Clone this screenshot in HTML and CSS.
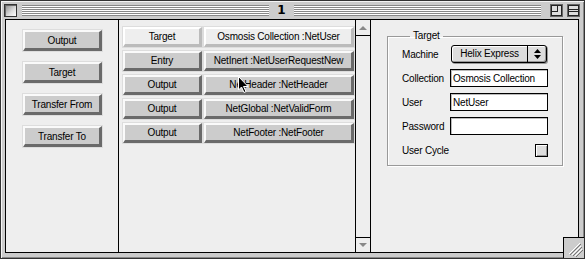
FILE: index.html
```html
<!DOCTYPE html>
<html lang="en">
<head>
    <meta charset="UTF-8">
    <title>1</title>
    <link rel="stylesheet" href="styles.css">
</head>
<body>
    <div class="window">
        <div class="titlebar">
            <span class="closebox"></span>
            <span class="stripes"></span>
            <span class="title">1</span>
            <span class="stripes"></span>
            <span class="winbox">
                <svg width="11" height="11" viewBox="0 0 11 11"><rect x="0.5" y="0.5" width="10" height="10" fill="none" stroke="#222"/><rect x="0.5" y="0.5" width="6" height="6" fill="none" stroke="#222"/></svg>
            </span>
            <span class="winbox">
                <svg width="11" height="11" viewBox="0 0 11 11"><rect x="0.5" y="0.5" width="10" height="10" fill="none" stroke="#222"/><line x1="0" y1="4.5" x2="11" y2="4.5" stroke="#222"/><line x1="0" y1="6.5" x2="11" y2="6.5" stroke="#222"/></svg>
            </span>
        </div>

        <div class="content">
            <div class="tools">
                <button class="btn">Output</button>
                <button class="btn">Target</button>
                <button class="btn">Transfer From</button>
                <button class="btn">Transfer To</button>
            </div>

            <div class="list">
                <div class="row selected">
                    <button class="btn kind">Target</button>
                    <button class="btn name">Osmosis Collection :NetUser</button>
                </div>
                <div class="row">
                    <button class="btn kind">Entry</button>
                    <button class="btn name">NetInert :NetUserRequestNew</button>
                </div>
                <div class="row">
                    <button class="btn kind">Output</button>
                    <button class="btn name">NetHeader :NetHeader</button>
                </div>
                <div class="row">
                    <button class="btn kind">Output</button>
                    <button class="btn name">NetGlobal :NetValidForm</button>
                </div>
                <div class="row">
                    <button class="btn kind">Output</button>
                    <button class="btn name">NetFooter :NetFooter</button>
                </div>
            </div>

            <div class="scrollbar">
                <div class="arrow up"></div>
                <div class="track"></div>
                <div class="arrow down"></div>
            </div>

            <div class="inspector">
                <fieldset class="group">
                    <legend>Target</legend>
                    <div class="fields">
                        <label>Machine</label>
                        <div class="popup">
                            <span class="popup-value">Helix Express</span>
                            <span class="popup-arrows">
                                <svg width="9" height="10" viewBox="0 0 9 10"><path d="M4.5 0 L8 4 L1 4 Z M1 6 L8 6 L4.5 10 Z" fill="#000"/></svg>
                            </span>
                        </div>

                        <label>Collection</label>
                        <div class="field">Osmosis Collection</div>

                        <label>User</label>
                        <div class="field">NetUser</div>

                        <label>Password</label>
                        <div class="field"></div>

                        <label class="wide">User Cycle</label>
                        <span class="checkbox"></span>
                    </div>
                </fieldset>
            </div>

            <div class="growbox">
                <svg width="20" height="20" viewBox="0 0 20 20">
                    <path d="M5 16 L16 5 M8 17 L17 8 M11 18 L18 11" stroke="#fff" stroke-width="1"/>
                    <path d="M6 17 L17 6 M9 18 L18 9 M12 19 L19 12" stroke="#777" stroke-width="1"/>
                </svg>
            </div>

            <svg class="cursor" width="12" height="18" viewBox="0 0 12 18">
                <path d="M0.5 0.5 L0.5 14 L3.5 11 L6 16.5 L8 15.5 L5.5 10.5 L10 10.5 Z" fill="#000" stroke="#fff" stroke-width="1"/>
            </svg>
        </div>
    </div>
</body>
</html>
```

FILE: styles.css
```css
* {
    margin: 0;
    padding: 0;
    box-sizing: border-box;
}

body {
    width: 585px;
    height: 259px;
    background: #eeeeee;
    font-family: 'Liberation Sans', Arial, sans-serif;
    font-size: 10px;
    letter-spacing: -0.2px;
    color: #000;
}

.window {
    width: 585px;
    height: 259px;
    border: 1px solid #333;
    background: #cccccc;
    box-shadow: inset 1px 1px 0 #f4f4f4, inset -1px -1px 0 #888;
    display: flex;
    flex-direction: column;
}

/* title bar */

.titlebar {
    height: 18px;
    display: flex;
    align-items: center;
    padding: 0 4px 0 3px;
}

.closebox {
    width: 13px;
    height: 13px;
    border: 1px solid #333;
    background: linear-gradient(135deg, #888, #ddd 60%, #fff);
    box-shadow: inset 1px 1px 0 #666;
}

.stripes {
    flex: 1;
    height: 11px;
    margin: 0 5px;
    background: repeating-linear-gradient(to bottom, #888 0, #888 1px, #fff 1px, #fff 2px);
}

.title {
    font-family: 'DejaVu Sans', sans-serif;
    font-weight: bold;
    font-size: 12px;
    letter-spacing: 0;
    padding: 0 3px;
}

.winbox {
    width: 13px;
    height: 13px;
    display: flex;
    align-items: center;
    justify-content: center;
    border: 1px solid #666;
    background: #ddd;
    margin-left: 4px;
}

.winbox:first-of-type {
    margin-left: 0;
}

/* content */

.content {
    position: relative;
    flex: 1;
    margin: 0 5px 5px 4px;
    border: 1px solid #000;
    background: #eeeeee;
    display: flex;
}

.btn {
    font-family: 'Liberation Sans', Arial, sans-serif;
    font-size: 10px;
    letter-spacing: -0.2px;
    color: #000;
    background: #cccccc;
    border-style: solid;
    border-width: 2px 3px 3px 2px;
    border-color: #fafafa #6a6a6a #6a6a6a #fafafa;
    box-shadow: 0 0 0 1px #dddddd;
    white-space: nowrap;
    cursor: pointer;
}

.tools {
    width: 113px;
    border-right: 1px solid #000;
    display: flex;
    flex-direction: column;
    gap: 11px;
    padding: 10px 0 0 17px;
}

.tools .btn {
    width: 79px;
    height: 21px;
}

.list {
    width: 237px;
    border-right: 1px solid #000;
    display: flex;
    flex-direction: column;
    gap: 4px;
    padding: 7px 0 0 4px;
}

.row {
    display: flex;
    gap: 2px;
}

.row .btn {
    height: 20px;
}

.kind {
    width: 79px;
}

.name {
    width: 150px;
}

.row.selected .btn {
    background: #eeeeee;
    border-color: #ffffff #bbbbbb #bbbbbb #ffffff;
}

/* scrollbar */

.scrollbar {
    width: 15px;
    border-right: 1px solid #000;
    display: flex;
    flex-direction: column;
}

.arrow {
    height: 16px;
    position: relative;
}

.arrow.up {
    border-bottom: 1px solid #000;
}

.arrow.down {
    border-top: 1px solid #000;
    height: 15px;
}

.arrow::after {
    content: "";
    position: absolute;
    left: 3px;
    width: 0;
    height: 0;
    border-left: 4px solid transparent;
    border-right: 4px solid transparent;
}

.arrow.up::after {
    top: 6px;
    border-bottom: 4px solid #888;
}

.arrow.down::after {
    top: 5px;
    border-top: 4px solid #888;
}

.track {
    flex: 1;
}

/* inspector */

.inspector {
    flex: 1;
    padding: 10px 0 0 16px;
}

.group {
    width: 176px;
    border: 1px solid #999;
    box-shadow: inset 1px 1px 0 #fff, 1px 1px 0 #fff;
    padding: 3px 14px 6px 14px;
}

.group legend {
    margin-left: 8px;
    padding: 0 3px;
    line-height: 12px;
}

.fields {
    display: grid;
    grid-template-columns: 48px 98px;
    grid-auto-rows: 18px;
    row-gap: 6px;
    align-items: center;
}

.fields label {
    white-space: nowrap;
}

.field {
    height: 18px;
    border: 1px solid #000;
    background: #fff;
    padding: 2px 2px 0;
    line-height: 13px;
    white-space: nowrap;
    overflow: hidden;
    box-shadow: inset 1px 1px 0 #bbb;
}

.popup {
    height: 18px;
    margin: 0 1px;
    border: 1px solid #000;
    border-radius: 3px;
    background: #dddddd;
    box-shadow: inset 1px 1px 0 #fff, inset -1px -1px 0 #999, 1px 1px 0 #999;
    display: flex;
}

.popup-value {
    flex: 1;
    text-align: center;
    line-height: 16px;
    white-space: nowrap;
}

.popup-arrows {
    width: 19px;
    border-left: 1px solid #000;
    display: flex;
    align-items: center;
    justify-content: center;
}

.checkbox {
    justify-self: end;
    width: 13px;
    height: 13px;
    border: 1px solid #000;
    background: #dddddd;
    box-shadow: inset 1px 1px 0 #fff, inset -1px -1px 0 #999;
}

.growbox {
    position: absolute;
    right: -6px;
    bottom: -6px;
    width: 21px;
    height: 21px;
    border-top: 1px solid #000;
    border-left: 1px solid #000;
    background: #cccccc;
}

.cursor {
    position: absolute;
    left: 232px;
    top: 56px;
}
```
